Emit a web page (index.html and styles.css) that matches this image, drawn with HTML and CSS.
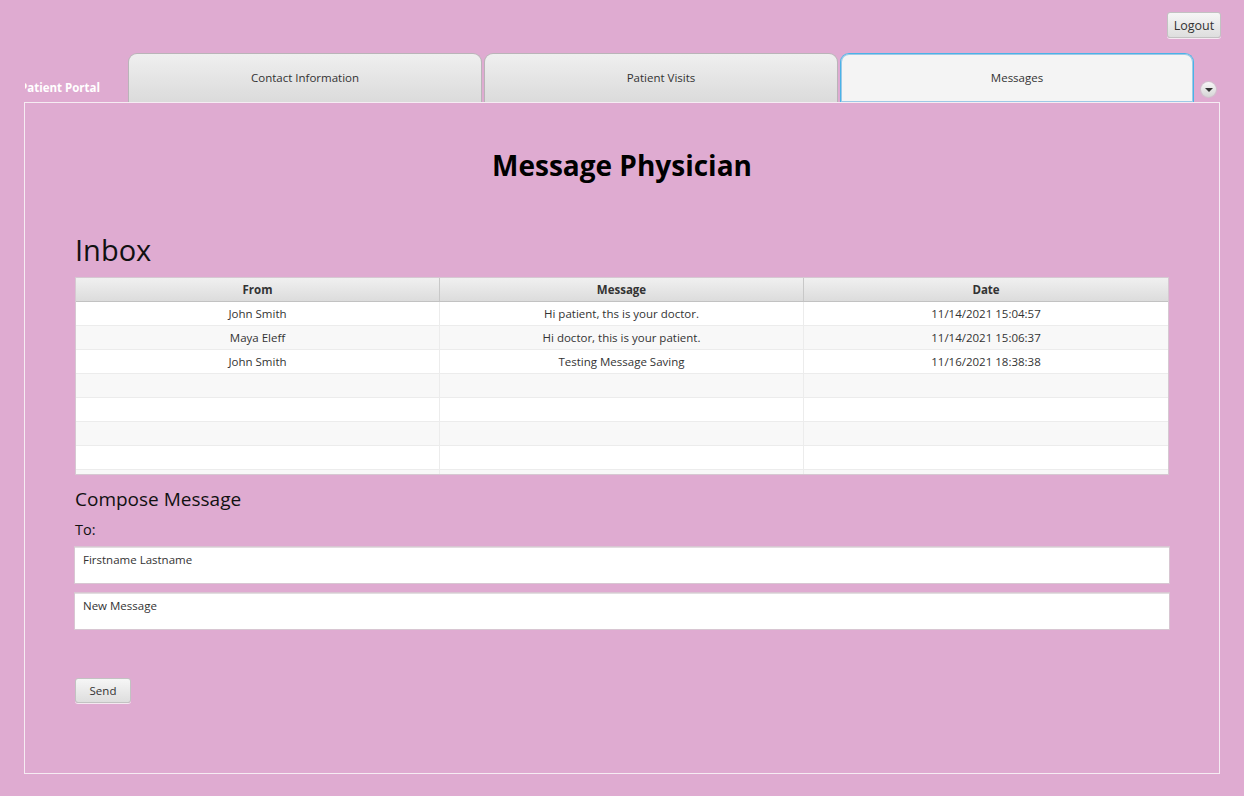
FILE: index.html
```html
<!DOCTYPE html>
<html lang="en">
<head>
<meta charset="utf-8">
<title>Patient Portal - Messages</title>
<link rel="stylesheet" href="styles.css">
</head>
<body>
<div class="app">
  <div class="topbar">
    <button class="btn logout">Logout</button>
  </div>
  <div class="tabbar">
    <div class="portal-label"><span>Patient Portal</span></div>
    <div class="tabs">
      <div class="tab">Contact Information</div>
      <div class="tab">Patient Visits</div>
      <div class="tab selected">Messages</div>
    </div>
    <div class="tab-menu"><span class="tri"></span></div>
  </div>
  <div class="panel">
    <h1 class="title">Message Physician</h1>
    <h2 class="inbox-title">Inbox</h2>
    <div class="table">
      <div class="row head">
        <div class="cell">From</div>
        <div class="cell">Message</div>
        <div class="cell">Date</div>
      </div>
      <div class="row">
        <div class="cell">John Smith</div>
        <div class="cell">Hi patient, ths is your doctor.</div>
        <div class="cell">11/14/2021 15:04:57</div>
      </div>
      <div class="row alt">
        <div class="cell">Maya Eleff</div>
        <div class="cell">Hi doctor, this is your patient.</div>
        <div class="cell">11/14/2021 15:06:37</div>
      </div>
      <div class="row">
        <div class="cell">John Smith</div>
        <div class="cell">Testing Message Saving</div>
        <div class="cell">11/16/2021 18:38:38</div>
      </div>
      <div class="row alt"><div class="cell"></div><div class="cell"></div><div class="cell"></div></div>
      <div class="row"><div class="cell"></div><div class="cell"></div><div class="cell"></div></div>
      <div class="row alt"><div class="cell"></div><div class="cell"></div><div class="cell"></div></div>
      <div class="row"><div class="cell"></div><div class="cell"></div><div class="cell"></div></div>
      <div class="row alt"><div class="cell"></div><div class="cell"></div><div class="cell"></div></div>
    </div>
    <h3 class="compose-title">Compose Message</h3>
    <div class="to-label">To:</div>
    <div class="field">Firstname Lastname</div>
    <div class="field second">New Message</div>
    <div class="actions">
      <button class="btn send">Send</button>
    </div>
  </div>
</div>
</body>
</html>
```

FILE: styles.css
```css
* { box-sizing: border-box; }

html, body {
  margin: 0;
  padding: 0;
}

body {
  background: #dfabd1;
  font-family: "Open Sans", "Noto Sans", "Liberation Sans", sans-serif;
  color: #333;
  width: 1244px;
  height: 796px;
  overflow: hidden;
}

.app {
  display: flex;
  flex-direction: column;
  height: 796px;
}

/* top bar */
.topbar {
  display: flex;
  justify-content: flex-end;
  padding: 12px 23px 0 0;
  height: 53px;
}

.btn {
  font-family: inherit;
  font-size: 11.5px;
  color: #333;
  background: linear-gradient(#f6f6f6, #dedede);
  border: 1px solid #c2c2c2;
  border-radius: 3px;
  box-shadow: 0 1px 0 #f5e8f1;
  padding: 0;
  cursor: pointer;
}

.logout {
  width: 54px;
  height: 26px;
  font-size: 12.5px;
}

/* tabs */
.tabbar {
  display: flex;
  align-items: stretch;
  height: 49px;
}

.portal-label {
  width: 103px;
  margin-left: 25px;
  overflow: hidden;
  display: flex;
  align-items: flex-end;
  padding-bottom: 7px;
}

.portal-label span {
  color: #fff;
  font-weight: bold;
  font-size: 11.5px;
  white-space: nowrap;
  margin-left: -5px;
}

.tabs {
  display: flex;
  gap: 2px;
}

.tab {
  width: 354px;
  height: 49px;
  border: 1px solid #b9b4b8;
  border-bottom: none;
  border-radius: 9px 9px 0 0;
  background: linear-gradient(#efefef, #dbdbdb);
  font-size: 11.5px;
  color: #333;
  text-align: center;
  padding-top: 16px;
}

.tab.selected {
  background: #f4f4f4;
  border: 1px solid #49b3e8;
  border-bottom: none;
  box-shadow: inset 0 0 0 1px #9dc9e6;
}

.tab-menu {
  margin: 29px 0 0 7px;
  width: 15px;
  height: 15px;
  border-radius: 50%;
  background: linear-gradient(#f7f7f7, #d5d5d5);
  box-shadow: 0 0 0 1px #cfc3cc;
  display: flex;
  align-items: center;
  justify-content: center;
}

.tri {
  width: 0;
  height: 0;
  border-left: 4px solid transparent;
  border-right: 4px solid transparent;
  border-top: 4px solid #333;
  margin-top: 1px;
}

/* content panel */
.panel {
  margin: 0 24px 0 24px;
  height: 672px;
  border: 1px solid #f6ecf3;
  padding: 42px 50px 0 50px;
  display: flex;
  flex-direction: column;
}

.title {
  margin: 0;
  text-align: center;
  font-size: 28px;
  line-height: 40px;
  font-weight: bold;
  color: #000;
}

.inbox-title {
  margin: 45px 0 0;
  font-size: 29px;
  line-height: 40px;
  font-weight: normal;
  color: #111;
}

/* table */
.table {
  margin-top: 7px;
  height: 198px;
  overflow: hidden;
  background: #fff;
  border: 1px solid #d6c8d2;
}

.row {
  display: grid;
  grid-template-columns: 1fr 1fr 1fr;
  height: 24px;
  background: #fff;
  border-bottom: 1px solid #ececec;
}

.row.alt {
  background: #f8f8f8;
}

.cell {
  font-size: 11.5px;
  line-height: 23px;
  text-align: center;
  border-right: 1px solid #ececec;
  white-space: nowrap;
}

.cell:last-child {
  border-right: none;
}

.row.head {
  background: linear-gradient(#f0f0f0, #dcdcdc);
  border-bottom: 1px solid #c2c2c2;
}

.row.head .cell {
  font-weight: bold;
  border-right: 1px solid #c8c8c8;
}

.row.head .cell:last-child {
  border-right: none;
}

/* compose */
.compose-title {
  margin: 10px 0 0;
  font-size: 19px;
  line-height: 28px;
  font-weight: normal;
  color: #111;
}

.to-label {
  margin-top: 7px;
  font-size: 14.5px;
  line-height: 20px;
  color: #111;
}

.field {
  margin-top: 7px;
  height: 36px;
  background: #fff;
  border-top: 1px solid #e2dde0;
  box-shadow: 0 0 0 1px #d8c6d2;
  font-size: 11.5px;
  color: #333;
  padding: 4px 8px;
}

.field.second {
  margin-top: 10px;
}

.actions {
  margin-top: 49px;
}

.send {
  width: 56px;
  height: 25px;
}
```
